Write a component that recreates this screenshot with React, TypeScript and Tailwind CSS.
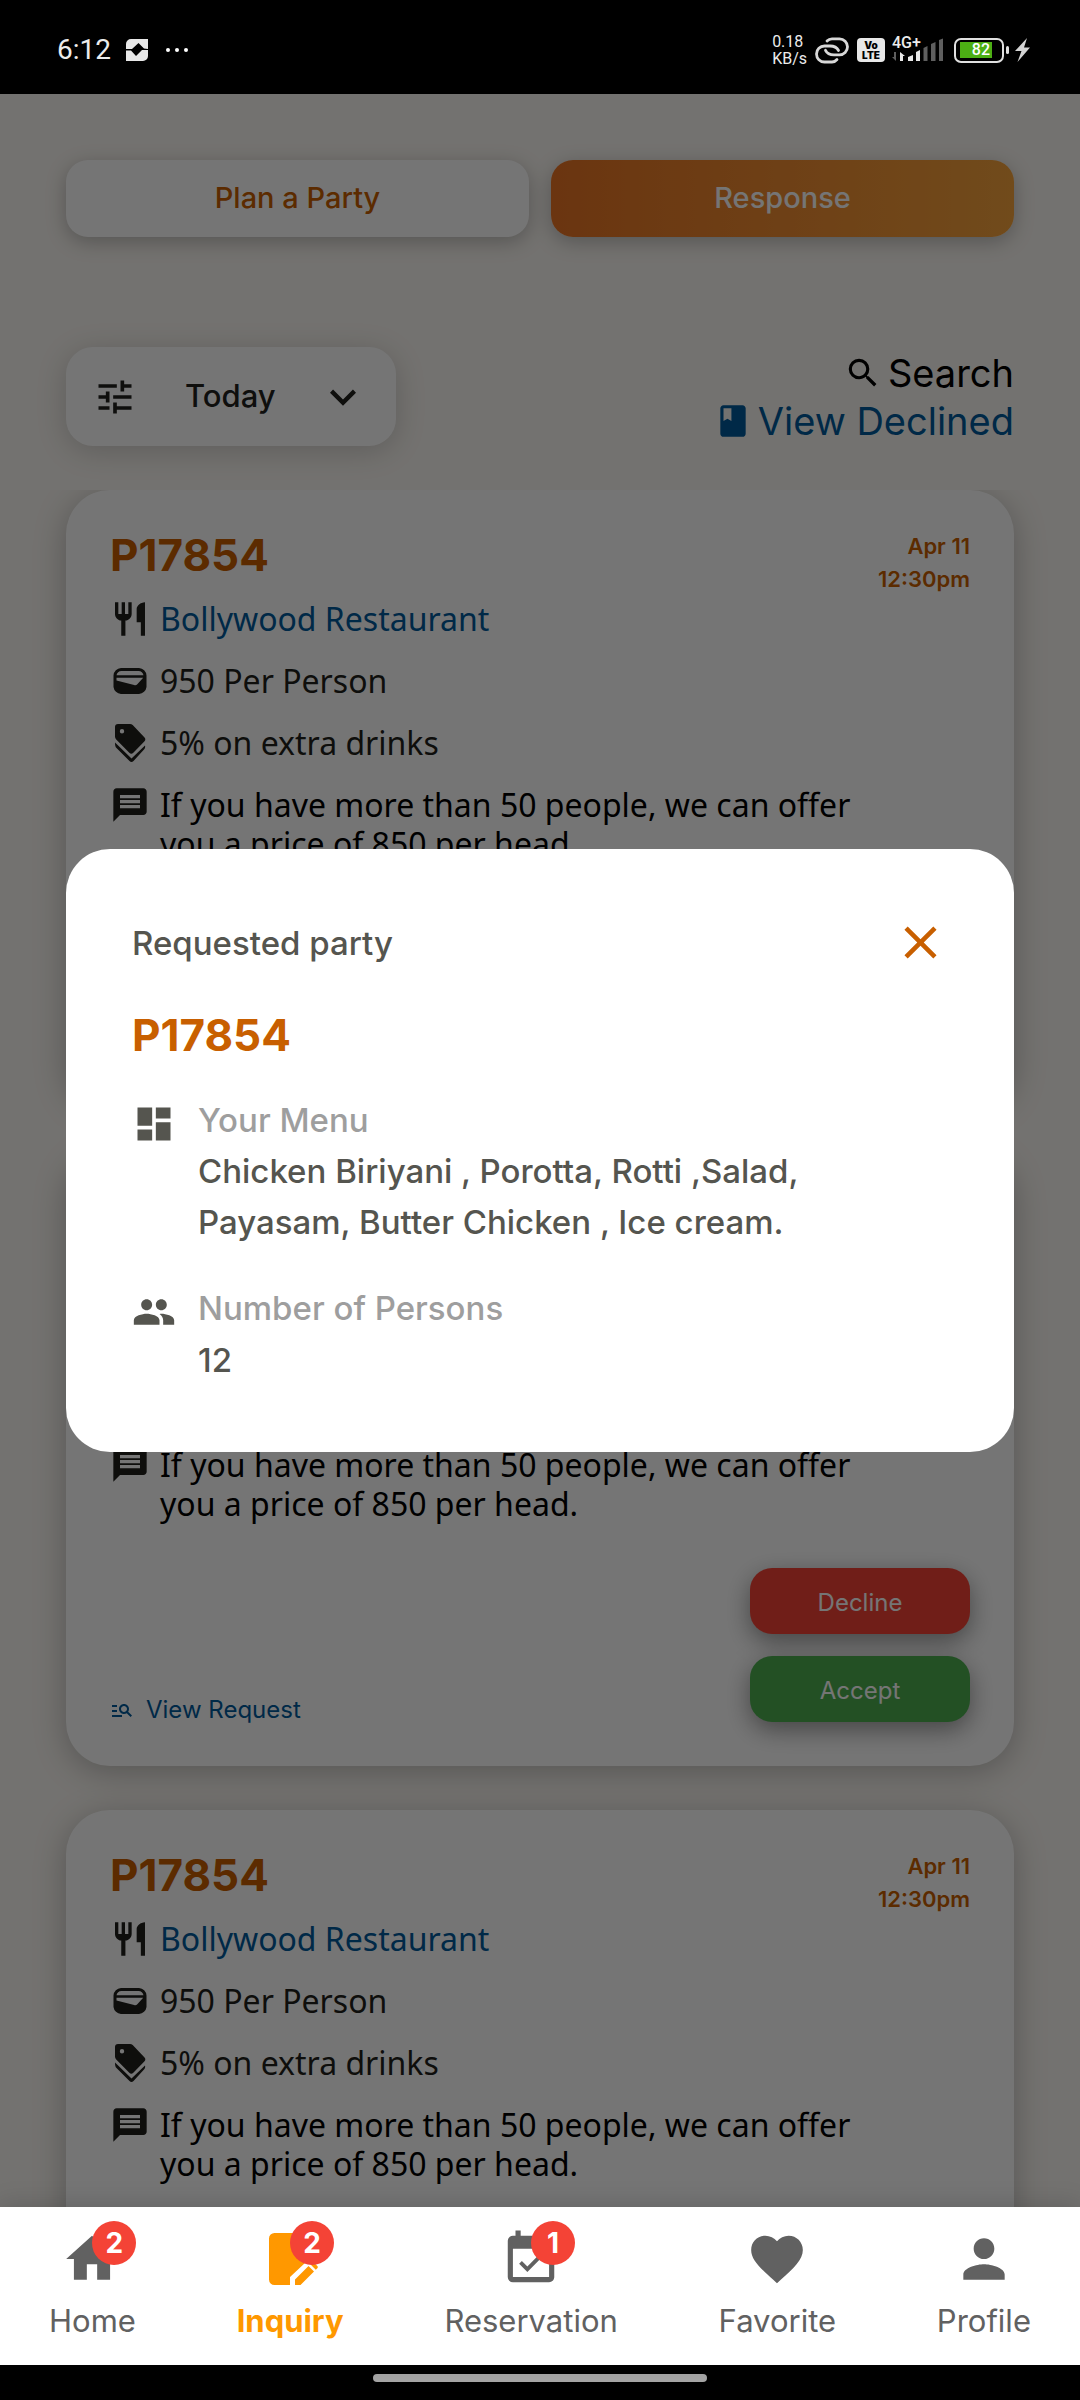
import React from "react";
import {
  MdBook,
  MdClose,
  MdDashboard,
  MdEventAvailable,
  MdFavorite,
  MdHome,
  MdKeyboardArrowDown,
  MdManageSearch,
  MdMessage,
  MdPeople,
  MdPerson,
  MdRestaurant,
  MdSearch,
  MdTune,
} from "react-icons/md";

function GalleryGlyph() {
  return (
    <svg viewBox="0 0 22 22" className="size-[22px]" aria-hidden="true">
      <path
        fill="#e8e8e8"
        d="M5 0h17v10l-4-.5L12.500 4 6 10H0V5a5 5 0 0 1 5-5zM0 11.500h5L10 17l6-6h6v6a5 5 0 0 1-5 5H0z"
      />
    </svg>
  );
}

function LinkGlyph() {
  return (
    <svg viewBox="0 0 34 27" className="h-[27px] w-[34px]" fill="none" stroke="#d8d8d8" strokeWidth="2.800" strokeLinecap="round" aria-hidden="true">
      <path d="M12 4c1.500-1.600 3-2.200 5-2.200h7.500a8 8 0 0 1 0 16H19c-4 0-7-1.500-8.500-4.500" />
      <path d="M22 22.500c-1.500 1.800-3 2.500-5 2.500H9.500a8 8 0 0 1 0-16H15c4 0 7 1.500 8.500 4.500" />
    </svg>
  );
}

function SignalGlyph() {
  return (
    <svg viewBox="0 0 52 24" className="h-6 w-[52px]" aria-hidden="true">
      <g fill="#e8e8e8">
        <path d="M8 14l5 4-2 0v5H8z" />
        <path d="M16 19l5-2v6h-5zM24 14l4-2v11h-4z" />
      </g>
      <g fill="#5f5f5f">
        <path d="M4 14v9l-4-4h2v-5z" />
        <path d="M31.500 10l4-2v15h-4zM39 6l4.500-2v19H39zM47 2l4-1.500V23h-4z" />
      </g>
    </svg>
  );
}

function BoltGlyph() {
  return (
    <svg viewBox="0 0 15 24" className="h-6 w-[15px]" aria-hidden="true">
      <path fill="#d4d4d4" d="M12 0L0 13h6.500L2.500 24 15 9.500H9z" />
    </svg>
  );
}

function WalletGlyph() {
  return (
    <svg viewBox="0 0 40 40" className="size-10" aria-hidden="true">
      <path
        fill="currentColor"
        fillRule="evenodd"
        d="M11 7h18a8 8 0 0 1 7.500 7.500v11.500a8 8 0 0 1-7.500 7H11a8 8 0 0 1-7.500-7V14.500A8 8 0 0 1 11 7zM6.500 14.300h27c-.6-2.600-2.200-4.300-5-4.300h-17c-2.800 0-4.400 1.700-5 4.300zM6.500 16.700v2.800l17.600 4.600c1.400.4 2.300.2 3.200-.8l5.900-6.600z"
      />
    </svg>
  );
}

function TagsGlyph() {
  return (
    <svg viewBox="0 0 40 40" className="size-10" aria-hidden="true">
      <path
        fill="currentColor"
        fillRule="evenodd"
        d="M8 1h12c1 0 2 .4 2.700 1.100l11.600 12.200a3 3 0 0 1 0 4.200L23.300 29.700a2.700 2.700 0 0 1-4 0L6.200 16.500A4 4 0 0 1 5 13.600V4a3 3 0 0 1 3-3zM12 6a2.200 2.200 0 1 0 0 4.400A2.200 2.200 0 0 0 12 6z"
      />
      <path fill="currentColor" d="M5 19.500l16.500 16L35 22.500c.4 1.600.1 2.900-1 4L23.500 38a2.800 2.800 0 0 1-4 0L6.500 25C5.400 24 5 22.500 5 19.500z" />
    </svg>
  );
}

function InquiryGlyph() {
  return (
    <svg viewBox="0 0 62 62" className="size-[62px]" aria-hidden="true">
      <path fill="currentColor" d="M15.500 5h36a5.500 5.500 0 0 1 5.500 5.500V31c-4-.5-8 1-11 4L31 49v8H15.500a5.500 5.500 0 0 1-5.500-5.500v-41A5.500 5.500 0 0 1 15.500 5z" />
      <path fill="currentColor" d="M36 51.500L49.500 38l5.500 5.500L41.500 57H36zM51.300 36.300l1.500-1.500c.7-.7 1.500-.7 2.200 0l3.300 3.300c.7.7.7 1.500 0 2.200l-1.500 1.500z" />
    </svg>
  );
}

function StatusBar() {
  return (
    <header className="flex h-[94px] shrink-0 items-center justify-between bg-black pt-[6px] pr-[50px] pl-[57px] font-['Roboto'] text-[#ececec]">
      <div className="flex items-center">
        <span className="text-[28px]/[38px]">6:12</span>
        <span className="ml-[15px]">
          <GalleryGlyph />
        </span>
        <span className="ml-[18px] flex gap-[5px]">
          <i className="size-1 rounded-full bg-white" />
          <i className="size-1 rounded-full bg-white" />
          <i className="size-1 rounded-full bg-white" />
        </span>
      </div>
      <div className="flex items-center">
        <span className="text-base/[17px]">
          0.18
          <br />
          KB/s
        </span>
        <span className="ml-2">
          <LinkGlyph />
        </span>
        <span className="ml-2 flex h-6 w-7 flex-col items-center justify-center rounded bg-[#e8e8e8] font-['Inter'] text-[10px]/[10px] font-black text-black">
          <span>Vo</span>
          <span>LTE</span>
        </span>
        <span className="relative ml-[7px]">
          <SignalGlyph />
          <span className="absolute -top-1 left-0 text-base/[17px] font-medium">4G+</span>
        </span>
        <span className="ml-[10px] flex h-[25px] w-[50px] items-center rounded-[7px] border-2 border-[#e0e0e0] pl-1">
          <span className="flex h-4 w-8 items-center justify-end bg-[#4caf14] pr-[2px] text-base/4 font-medium text-white">82</span>
        </span>
        <span className="ml-[2px] h-2 w-[3px] rounded-sm bg-[#e0e0e0]" />
        <span className="ml-[6px]">
          <BoltGlyph />
        </span>
      </div>
    </header>
  );
}

function DetailRow({ icon, children }: { icon: React.ReactNode; children: React.ReactNode }) {
  return (
    <li className="flex gap-[10px]">
      <span className="size-10 shrink-0 text-[#1f1f1b]">{icon}</span>
      <span className="max-w-[700px]">{children}</span>
    </li>
  );
}

function PartyCard() {
  return (
    <article className="rounded-[44px] bg-white px-11 pt-10 pb-11 shadow-[0_6px_32px_rgba(0,0,0,0.25)]">
      <div className="mb-[3px] flex justify-between">
        <h2 className="text-[44px]/[50px] font-bold text-[#c85f00]">P17854</h2>
        <p className="text-right text-[22px]/[33px] font-semibold text-[#c85f00]">
          Apr 11
          <br />
          12:30pm
        </p>
      </div>
      <ul className="flex flex-col gap-[22px] font-['Noto_Sans'] text-[32px]/[39px] text-[#1f1f1b]">
        <DetailRow icon={<MdRestaurant size={40} />}>
          <a href="#restaurant" className="text-[#005a9c]">
            Bollywood Restaurant
          </a>
        </DetailRow>
        <DetailRow icon={<WalletGlyph />}>950 Per Person</DetailRow>
        <DetailRow icon={<TagsGlyph />}>5% on extra drinks</DetailRow>
        <DetailRow icon={<MdMessage size={40} />}>
          <span className="text-black">If you have more than 50 people, we can offer you a price of 850 per head.</span>
        </DetailRow>
      </ul>
      <div className="mt-[45px] flex items-end justify-between">
        <a href="#request" className="flex items-center gap-3 text-[24px]/[24px] text-[#005a9c]">
          <MdManageSearch size={24} />
          View Request
        </a>
        <div className="flex w-[220px] flex-col gap-[22px]">
          <button type="button" className="h-[66px] rounded-[22px] bg-[#f44336] pt-1 text-[24px] text-white shadow-[0_8px_24px_rgba(0,0,0,0.4)]">
            Decline
          </button>
          <button type="button" className="h-[66px] rounded-[22px] bg-[#4caf50] pt-1 text-[24px] text-white shadow-[0_8px_24px_rgba(0,0,0,0.4)]">
            Accept
          </button>
        </div>
      </div>
    </article>
  );
}

function RequestDialog() {
  return (
    <section
      role="dialog"
      aria-modal="true"
      aria-labelledby="dialog-title"
      className="w-full rounded-[44px] bg-white p-[66px] font-medium text-[#55554f]"
    >
      <div className="flex items-center justify-between">
        <h1 id="dialog-title" className="text-[33px]/[40px]">
          Requested party
        </h1>
        <button type="button" aria-label="Close" className="text-[#c85f00]">
          <MdClose size={55} />
        </button>
      </div>
      <p className="mt-[39px] text-[44px]/[52px] font-bold text-[#c85f00]">P17854</p>
      <dl className="mt-[33px] flex flex-col gap-[34px] text-[33px]/[51px]">
        <div className="flex gap-[22px]">
          <MdDashboard size={44} className="mt-2 shrink-0" />
          <div>
            <dt className="leading-[52px] text-[#9e9e9e]">Your Menu</dt>
            <dd>
              Chicken Biriyani , Porotta, Rotti ,Salad,
              <br />
              Payasam, Butter Chicken , Ice cream.
            </dd>
          </div>
        </div>
        <div className="flex gap-[22px]">
          <MdPeople size={44} className="mt-2 shrink-0" />
          <div>
            <dt className="leading-[52px] text-[#9e9e9e]">Number of Persons</dt>
            <dd className="leading-[52px]">12</dd>
          </div>
        </div>
      </dl>
    </section>
  );
}

const tabs = [
  { label: "Home", icon: <MdHome size={62} />, badge: 2 },
  { label: "Inquiry", icon: <InquiryGlyph />, badge: 2, active: true },
  { label: "Reservation", icon: <MdEventAvailable size={62} />, badge: 1 },
  { label: "Favorite", icon: <MdFavorite size={62} /> },
  { label: "Profile", icon: <MdPerson size={62} /> },
];

function BottomNav() {
  return (
    <nav className="relative z-10 flex shrink-0 justify-between bg-white px-[49px] pt-[21px] pb-[25px] shadow-[0_-2px_24px_rgba(0,0,0,0.15)]">
      {tabs.map((tab) => (
        <a
          key={tab.label}
          href={"#" + tab.label.toLowerCase()}
          aria-current={tab.active ? "page" : undefined}
          className={
            tab.active
              ? "flex flex-col items-center gap-3 font-bold text-[#ff9800]"
              : "flex flex-col items-center gap-3 text-[#616161]"
          }
        >
          <span className="relative">
            {tab.icon}
            {tab.badge && (
              <span className="absolute -top-[7px] left-[31px] flex size-11 items-center justify-center rounded-full bg-[#f44336] text-[28px] font-bold text-white">
                {tab.badge}
              </span>
            )}
          </span>
          <span className="text-[31px]/[38px]">{tab.label}</span>
        </a>
      ))}
    </nav>
  );
}

export default function App() {
  return (
    <div className="flex h-screen flex-col bg-black font-['Inter',sans-serif]">
      <StatusBar />
      <main className="relative flex min-h-0 flex-1 flex-col overflow-hidden bg-[#fbf8f3]">
        <div className="flex gap-[22px] px-[66px] pt-[66px]">
          <button type="button" className="h-[77px] flex-1 rounded-[22px] bg-white pb-[2px] text-[29px] font-medium text-[#c85f00] shadow-[0_5px_20px_rgba(0,0,0,0.25)]">
            Plan a Party
          </button>
          <button type="button" className="h-[77px] flex-1 rounded-[22px] bg-linear-to-r from-[#e97424] to-[#f6a33c] pb-[2px] text-[29px] font-medium text-white shadow-[0_5px_20px_rgba(0,0,0,0.25)]">
            Response
          </button>
        </div>
        <div className="mt-[110px] mb-11 flex items-center justify-between px-[66px]">
          <label className="flex h-[99px] w-[330px] items-center rounded-[27px] bg-white px-[27px] text-[#22221e] shadow-[0_5px_30px_rgba(0,0,0,0.18)]">
            <MdTune size={44} className="shrink-0" />
            <select aria-label="Period" className="min-w-0 flex-1 appearance-none bg-transparent pl-12 text-[31px] font-medium">
              <option>Today</option>
            </select>
            <MdKeyboardArrowDown size={52} className="shrink-0" />
          </label>
          <div className="flex flex-col items-end text-[38px]/[48px]">
            <button type="button" className="flex items-center gap-[6px] text-black">
              <MdSearch size={38} />
              Search
            </button>
            <a href="#declined" className="flex items-center gap-[6px] text-[#005a9c]">
              <MdBook size={38} />
              View Declined
            </a>
          </div>
        </div>
        <div className="flex min-h-0 flex-1 flex-col gap-11 overflow-y-auto px-[66px] [scrollbar-width:none]">
          <PartyCard />
          <PartyCard />
          <PartyCard />
        </div>
        <div className="absolute inset-0 flex items-center justify-center bg-black/54 px-[66px]">
          <RequestDialog />
        </div>
      </main>
      <BottomNav />
      <footer className="flex h-[35px] shrink-0 items-start justify-center bg-black pt-[9px]">
        <span className="h-2 w-[334px] rounded-full bg-[#a6a6a6]" />
      </footer>
    </div>
  );
}
